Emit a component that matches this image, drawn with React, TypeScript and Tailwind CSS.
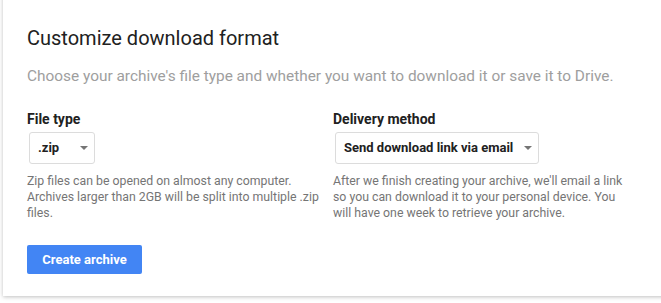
import { useState } from "react";

interface OptionProps {
    value: string
    width: string
}

function SelectBox({ value, width }: OptionProps) {
    return (
        <div className={`ml-[2px] flex h-[32px] items-center justify-between rounded-[3px] border border-[#dcdcdc] bg-white pl-[8px] pr-[6px] ${width}`}>
            <span className="whitespace-nowrap text-[13px] font-bold text-[#212121]">{value}</span>
            <span className="h-0 w-0 border-x-[4px] border-t-[4px] border-x-transparent border-t-[#757575]" />
        </div>
    )
}

export default function App() {
    const [fileType] = useState(".zip")
    const [delivery] = useState("Send download link via email")

    return (
        <div className="h-[303px] w-[661px] overflow-hidden bg-white font-['Roboto',sans-serif]">
            <div className="-mt-[8px] ml-[3px] w-[700px] bg-white pl-[24px] pt-[32px] pb-[22px] shadow-[0_1px_4px_rgba(0,0,0,0.25)]">
                <h1 className="text-[20px] leading-[28px] text-[#212121]">Customize download format</h1>
                <p className="mt-[14px] whitespace-nowrap text-[15.4px] leading-[20px] text-[#9e9e9e]">
                    Choose your archive's file type and whether you want to download it or save it to Drive.
                </p>

                <div className="mt-[23px] grid grid-cols-[306px_306px]">
                    <div>
                        <div className="text-[14px] font-bold leading-[20px] text-[#212121]">File type</div>
                        <div className="mt-[3px]">
                            <SelectBox value={fileType} width="w-[66px]" />
                        </div>
                        <p className="mt-[9px] whitespace-nowrap text-[12.3px] leading-[16px] text-[#757575]">
                            Zip files can be opened on almost any computer.<br />
                            Archives larger than 2GB will be split into multiple .zip<br />
                            files.
                        </p>
                    </div>
                    <div>
                        <div className="text-[14px] font-bold leading-[20px] text-[#212121]">Delivery method</div>
                        <div className="mt-[3px]">
                            <SelectBox value={delivery} width="w-[204px]" />
                        </div>
                        <p className="mt-[9px] whitespace-nowrap text-[12.3px] leading-[16px] text-[#757575]">
                            After we finish creating your archive, we'll email a link<br />
                            so you can download it to your personal device. You<br />
                            will have one week to retrieve your archive.
                        </p>
                    </div>
                </div>

                <button className="mt-[24px] h-[29px] w-[115px] rounded-[2px] bg-[#4285f4] text-[13px] font-bold text-white">
                    Create archive
                </button>
            </div>
        </div>
    )
}
